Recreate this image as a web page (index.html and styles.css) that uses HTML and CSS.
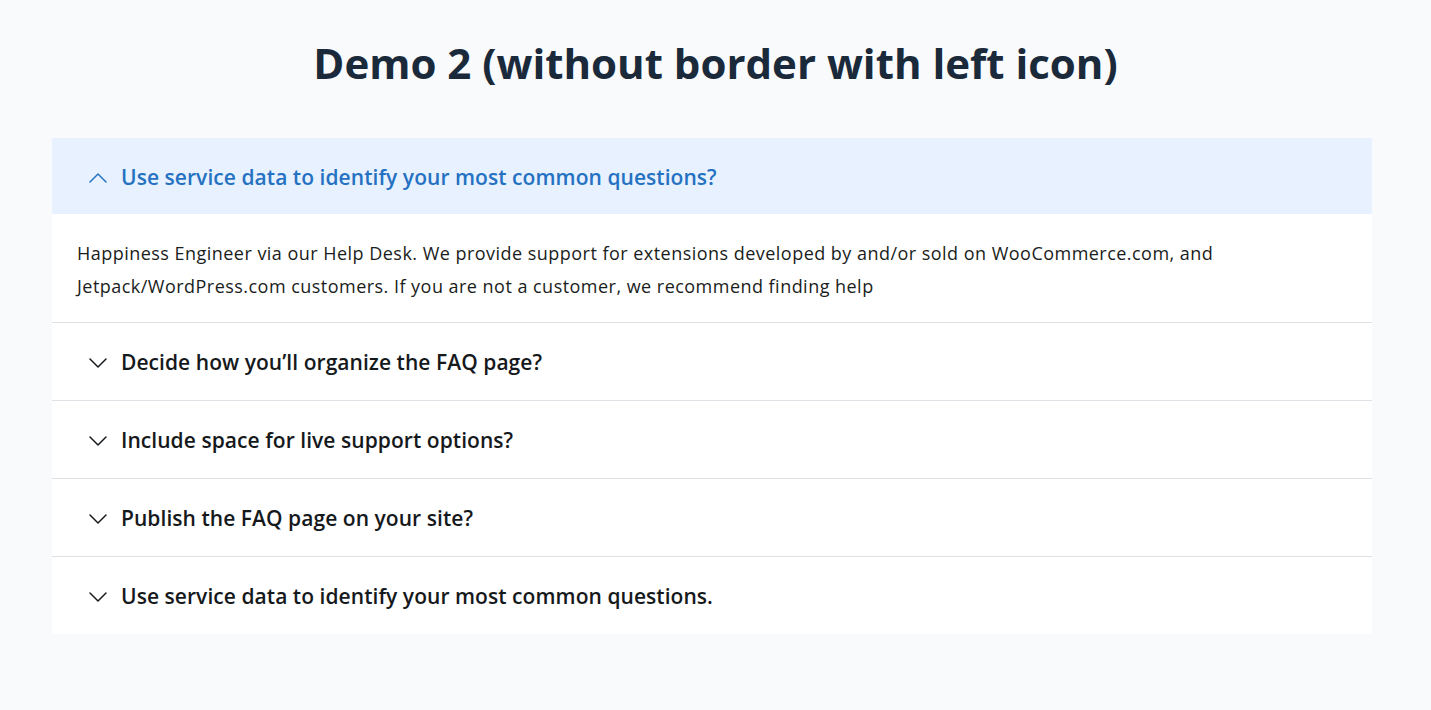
FILE: index.html
```html
<!DOCTYPE html>
<html lang="en">
<head>
<meta charset="utf-8">
<title>Demo 2</title>
<link rel="stylesheet" href="styles.css">
</head>
<body>
<main class="page">
  <h1 class="title">Demo 2 (without border with left icon)</h1>
  <div class="accordion">
    <div class="item open">
      <button class="head">
        <svg class="chev" viewBox="0 0 18 18" width="18" height="18"><path d="M1 14 L9 6 L17 14" fill="none" stroke="currentColor" stroke-width="1.5" stroke-linecap="round" stroke-linejoin="round"/></svg>
        <span>Use service data to identify your most common questions?</span>
      </button>
      <div class="body">Happiness Engineer via our Help Desk. We provide support for extensions developed by and/or sold on WooCommerce.com, and Jetpack/WordPress.com customers. If you are not a customer, we recommend finding help</div>
    </div>
    <div class="item">
      <button class="head">
        <svg class="chev" viewBox="0 0 18 18" width="18" height="18"><path d="M1 6 L9 14 L17 6" fill="none" stroke="currentColor" stroke-width="1.5" stroke-linecap="round" stroke-linejoin="round"/></svg>
        <span>Decide how you’ll organize the FAQ page?</span>
      </button>
    </div>
    <div class="item">
      <button class="head">
        <svg class="chev" viewBox="0 0 18 18" width="18" height="18"><path d="M1 6 L9 14 L17 6" fill="none" stroke="currentColor" stroke-width="1.5" stroke-linecap="round" stroke-linejoin="round"/></svg>
        <span>Include space for live support options?</span>
      </button>
    </div>
    <div class="item">
      <button class="head">
        <svg class="chev" viewBox="0 0 18 18" width="18" height="18"><path d="M1 6 L9 14 L17 6" fill="none" stroke="currentColor" stroke-width="1.5" stroke-linecap="round" stroke-linejoin="round"/></svg>
        <span>Publish the FAQ page on your site?</span>
      </button>
    </div>
    <div class="item last">
      <button class="head">
        <svg class="chev" viewBox="0 0 18 18" width="18" height="18"><path d="M1 6 L9 14 L17 6" fill="none" stroke="currentColor" stroke-width="1.5" stroke-linecap="round" stroke-linejoin="round"/></svg>
        <span>Use service data to identify your most common questions.</span>
      </button>
    </div>
  </div>
</main>
</body>
</html>
```
FILE: styles.css
```css
html, body {
  margin: 0;
  padding: 0;
  background: #f8fafc;
}
body {
  font-family: "Open Sans", "Noto Sans", sans-serif;
  color: #212529;
}
.page {
  padding: 34px 0 40px 52px;
}
.title {
  margin: 0 0 46px -52px;
  text-align: center;
  font-size: 42px;
  line-height: 58px;
  font-weight: 700;
  color: #1b2a3a;
}
.accordion {
  width: 1320px;
  background: #ffffff;
}
.item {
  border-bottom: 1px solid #dee2e6;
}
.item.last {
  border-bottom: none;
}
.head {
  display: flex;
  align-items: center;
  gap: 14px;
  width: 100%;
  height: 77px;
  padding: 1px 36px 0 37px;
  margin: 0;
  border: none;
  background: #ffffff;
  font-family: inherit;
  font-size: 21px;
  letter-spacing: 0.05px;
  font-weight: 600;
  color: #16191c;
  text-align: left;
  cursor: pointer;
}
.item.open .head {
  height: 76px;
  background: #e7f1ff;
  color: #2571c2;
}
.chev {
  flex: none;
}
.body {
  padding: 23px 25px 19px;
  font-size: 18px;
  letter-spacing: 0.47px;
  line-height: 33px;
  color: #1a1d20;
}
```
